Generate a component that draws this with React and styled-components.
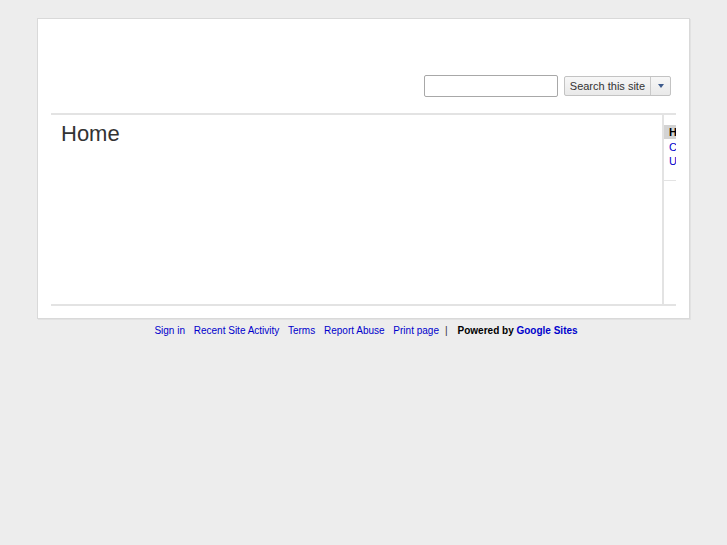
import styled, { createGlobalStyle } from "styled-components";

const Global = createGlobalStyle`
  html, body {
    margin: 0;
    padding: 0;
    background: #ededed;
    font-family: "Liberation Sans", Arial, sans-serif;
  }
  * {
    box-sizing: border-box;
  }
`;

const Page = styled.div`
  padding: 18px 0 0 37px;
`;

const Wrapper = styled.div`
  width: 653px;
  height: 301px;
  background: #fff;
  border: 1px solid #d9d9d9;
  box-shadow: 1px 1px 0 #e2e2e2;
  padding: 0 13px;
`;

const Header = styled.div`
  height: 94px;
  display: flex;
  align-items: flex-end;
  justify-content: flex-end;
  gap: 6px;
  padding: 0 5px 16px 0;
`;

const SearchInput = styled.input`
  width: 134px;
  height: 22px;
  border: 1px solid #a8a8a8;
  border-radius: 2px;
  margin: 0;
  padding: 0 4px;
  outline: none;
`;

const SearchButton = styled.div`
  display: flex;
  height: 20px;
  border: 1px solid #c3c3c3;
  border-radius: 2px;
  background: linear-gradient(#f7f7f7, #e9e9e9);
  margin-bottom: 1px;
  font-size: 11px;
  color: #333;
`;

const ButtonLabel = styled.span`
  display: flex;
  align-items: center;
  padding: 0 5px;
  white-space: nowrap;
`;

const Caret = styled.span`
  display: flex;
  align-items: center;
  justify-content: center;
  width: 20px;
  border-left: 1px solid #c9c9c9;

  &::after {
    content: "";
    border-left: 3px solid transparent;
    border-right: 3px solid transparent;
    border-top: 4px solid #3d5a8c;
  }
`;

const Body = styled.div`
  width: 625px;
  height: 193px;
  border-top: 2px solid #e3e3e3;
  border-bottom: 2px solid #e3e3e3;
  display: grid;
  grid-template-columns: 611px 160px;
  overflow: hidden;
`;

const Main = styled.div`
  padding: 6px 10px;
`;

const Title = styled.h1`
  margin: 0;
  font-size: 22px;
  font-weight: normal;
  line-height: 26px;
  color: #333;
`;

const Sidebar = styled.div`
  border-left: 2px solid #e3e3e3;
  padding-top: 10px;
`;

const Nav = styled.div`
  border-bottom: 1px solid #e3e3e3;
  padding-bottom: 12px;
`;

const NavItem = styled.div`
  font-size: 11px;
  line-height: 14px;
  padding: 0 5px;
  margin-bottom: ${(p) => (p.$active ? "1px" : "0")};
  color: ${(p) => (p.$active ? "#000" : "#00c")};
  font-weight: ${(p) => (p.$active ? "bold" : "normal")};
  background: ${(p) => (p.$active ? "#d3d3d3" : "transparent")};
`;

const Footer = styled.div`
  width: 653px;
  text-align: center;
  font-size: 10px;
  padding-top: 6px;
  padding-left: 5px;
  color: #333;
`;

const FootLink = styled.a`
  color: #00c;
  text-decoration: none;
  margin-right: 6px;
`;

const Powered = styled.span`
  font-weight: bold;
  color: #000;
  margin-left: 10px;
`;

const Brand = styled.a`
  color: #00c;
  text-decoration: none;
`;

export default function App() {
  return (
    <>
      <Global />
      <Page>
        <Wrapper>
          <Header>
            <SearchInput />
            <SearchButton>
              <ButtonLabel>Search this site</ButtonLabel>
              <Caret />
            </SearchButton>
          </Header>
          <Body>
            <Main>
              <Title>Home</Title>
            </Main>
            <Sidebar>
              <Nav>
                <NavItem $active>Home</NavItem>
                <NavItem>Contact</NavItem>
                <NavItem>Updates</NavItem>
              </Nav>
            </Sidebar>
          </Body>
        </Wrapper>
        <Footer>
          <FootLink href="#">Sign in</FootLink>{" "}
          <FootLink href="#">Recent Site Activity</FootLink>{" "}
          <FootLink href="#">Terms</FootLink>{" "}
          <FootLink href="#">Report Abuse</FootLink>{" "}
          <FootLink href="#">Print page</FootLink>|
          <Powered>
            Powered by <Brand href="#">Google Sites</Brand>
          </Powered>
        </Footer>
      </Page>
    </>
  );
}
